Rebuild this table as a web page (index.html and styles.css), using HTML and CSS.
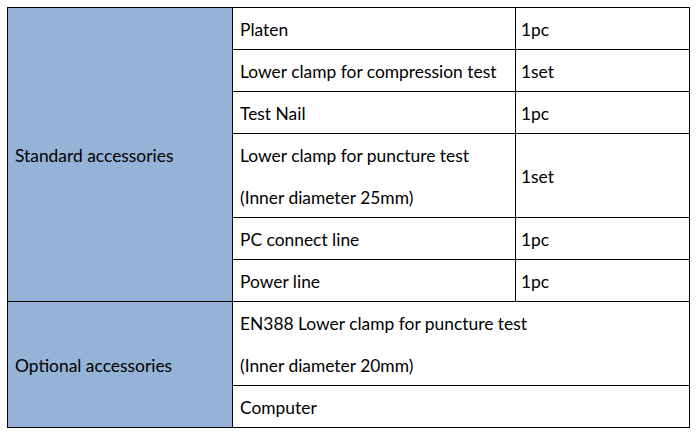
FILE: index.html
```html
<!DOCTYPE html>
<html>
<head>
<meta charset="utf-8">
<link rel="stylesheet" href="styles.css">
</head>
<body>
<table class="spec">
  <colgroup>
    <col class="c1"><col class="c2"><col class="c3">
  </colgroup>
  <tr class="r1">
    <td class="head" rowspan="7">Standard accessories</td>
    <td>Platen</td><td class="q">1pc</td>
  </tr>
  <tr class="r1"><td>Lower clamp for compression test</td><td class="q">1set</td></tr>
  <tr class="r1"><td>Test Nail</td><td class="q">1pc</td></tr>
  <tr class="r1"><td>Lower clamp for puncture test</td><td class="q" rowspan="2">1set</td></tr>
  <tr class="r1"><td>(Inner diameter 25mm)</td></tr>
  <tr class="r1"><td>PC connect line</td><td class="q">1pc</td></tr>
  <tr class="r1"><td>Power line</td><td class="q">1pc</td></tr>
  <tr class="r1">
    <td class="head" rowspan="3">Optional accessories</td>
    <td class="nb" colspan="2">EN388 Lower clamp for puncture test</td>
  </tr>
  <tr class="r1"><td class="nt" colspan="2">(Inner diameter 20mm)</td></tr>
  <tr class="r1"><td colspan="2">Computer</td></tr>
</table>
</body>
</html>
```
FILE: styles.css
```css
html, body { margin: 0; padding: 0; background: #fff; }
body { padding: 7px 0 0 7px; font-family: "Lato", "Liberation Sans", sans-serif; font-size: 17.4px; color: #000; }
.spec { border-collapse: collapse; table-layout: fixed; width: 682px; }
.c1 { width: 225px; }
.c2 { width: 283px; }
.c3 { width: 174px; }
.spec td { border: 1px solid #000; padding: 2px 0 0 7px; height: 41px; box-sizing: border-box; vertical-align: middle; white-space: nowrap; }
.spec td.q { padding-left: 5px; }
.spec tr { height: 42px; }
.spec td.head { background: #95b3d7; }
.spec tr:nth-child(4) td:first-child { border-bottom: none; }
.spec tr:nth-child(5) td:first-child { border-top: none; }
.spec td.nb { border-bottom: none; }
.spec td.nt { border-top: none; }
```
